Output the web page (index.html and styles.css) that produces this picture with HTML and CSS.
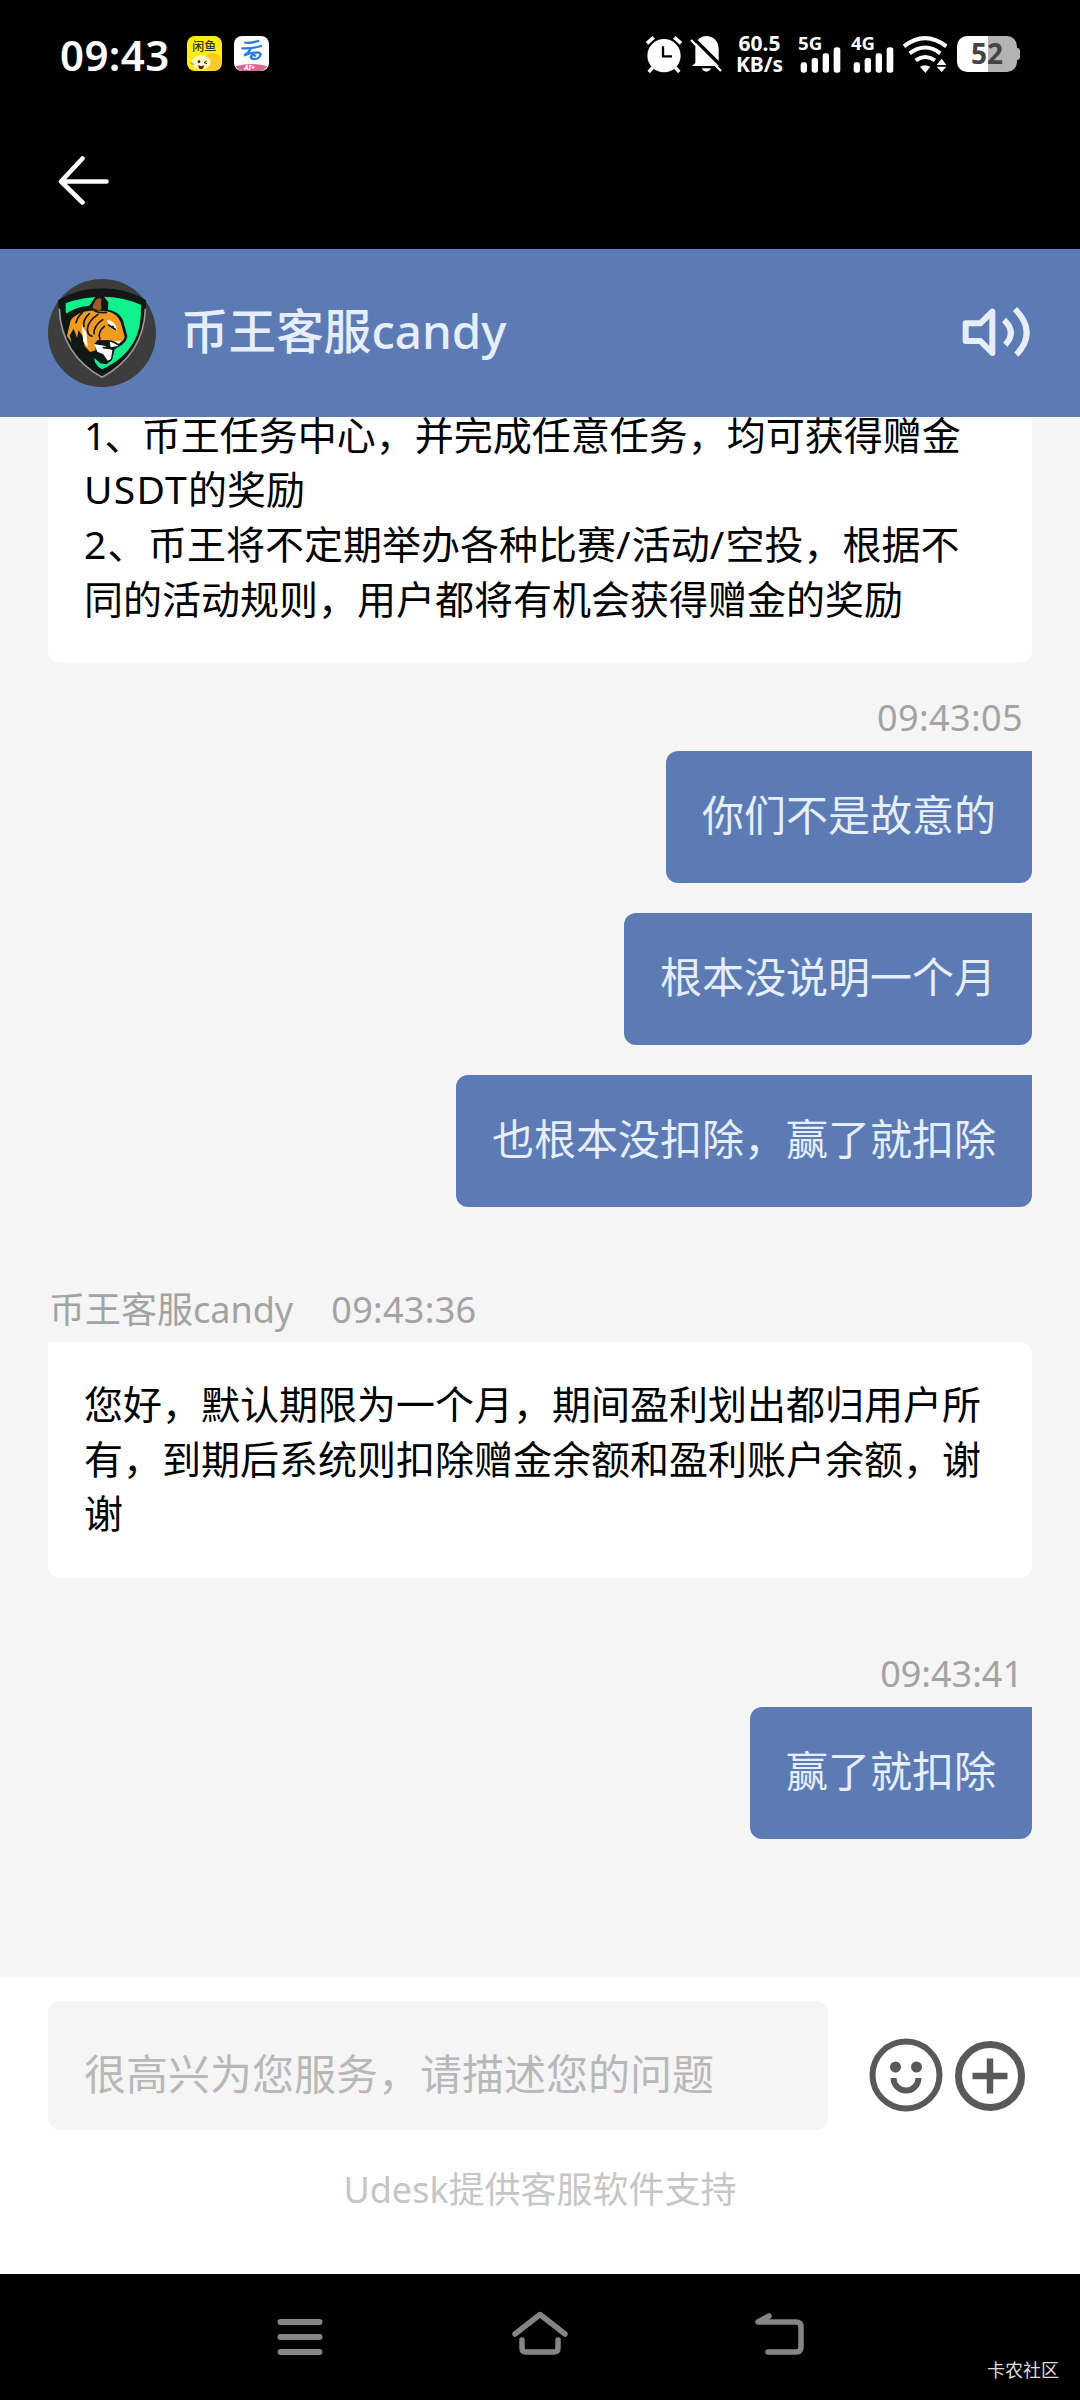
FILE: index.html
```html
<!DOCTYPE html>
<html lang="zh-CN">
<head>
    <meta charset="UTF-8">
    <meta name="viewport" content="width=device-width, initial-scale=1.0">
    <title>币王客服candy</title>
    <link rel="stylesheet" href="styles.css">
</head>
<body>
    <div class="screen">
        <div class="status-bar">
            <span class="clock">09:43</span>
            <svg class="app-icon app-fish" viewBox="0 0 105 105">
                <rect width="105" height="105" rx="24" fill="#ffec14"/>
                <circle cx="76" cy="78" r="27" fill="#ffc928"/>
                <ellipse cx="42" cy="79" rx="29" ry="22" fill="#fff6b8"/>
                <circle cx="36" cy="77" r="4" fill="#222"/>
                <path d="M59 75l-8 5 9 3" fill="none" stroke="#222" stroke-width="3"/>
                <path d="M34 88q9 5 17 0-1 12-9 12t-8-12z" fill="#5b1a10"/>
                <path d="M10 80l10 6" stroke="#f28b30" stroke-width="4"/>
                <text x="16" y="45" font-size="36" font-weight="500" fill="#333" textLength="72">闲鱼</text>
            </svg>
            <svg class="app-icon app-cloud" viewBox="0 0 105 105">
                <rect width="105" height="105" rx="24" fill="#fff"/>
                <path d="M5 91q48-14 95 0-8 14-24 14H28Q12 105 5 91z" fill="#d86a92"/>
                <path d="M34 20q18 2 39-5M25 37q32 1 56-7M50 39q-8 14-20 19 22-9 40-9 12 2 9 8-4 13-20 12-12-2-7-9 6-5 11-1" fill="none" stroke="#2b7fd8" stroke-width="7" stroke-linecap="round"/>
                <text x="31" y="102" font-size="20" font-weight="700" font-style="italic" fill="#fff">AI+</text>
            </svg>
            <div class="status-right">
                <svg width="38" height="38" viewBox="74 44 114 114" fill="#fff">
                    <circle cx="131" cy="106" r="50"/>
                    <path d="M80 69l20-18M162 51l20 18" stroke="#fff" stroke-width="11"/>
                    <path d="M97 142l-12 13M165 142l12 13" stroke="#fff" stroke-width="10"/>
                    <path d="M128 78v30h27" fill="none" stroke="#000" stroke-width="7"/>
                </svg>
                <svg class="bell" width="33" height="38" viewBox="211 44 99 114">
                    <path d="M227 128V85c0-23 13-38 33-38s37 15 37 38v40l6 12H217z" fill="#fff"/>
                    <path d="M246 144h28q-5 10-14 10t-14-10z" fill="#fff"/>
                    <path d="M219 51l92 92" stroke="#000" stroke-width="10"/>
                    <path d="M214 59l90 93" stroke="#fff" stroke-width="7"/>
                </svg>
                <div class="speed"><span>60.5</span><span>KB/s</span></div>
                <svg class="signal" width="43" height="38" viewBox="532 44 129 114" fill="#fff">
                    <text x="532" y="89" font-size="51" font-weight="700" textLength="73" lengthAdjust="spacingAndGlyphs">5G</text>
                    <rect x="540" y="126" width="19" height="31" rx="7"/>
                    <rect x="573" y="113" width="19" height="44" rx="7"/>
                    <rect x="606" y="99" width="19" height="58" rx="7"/>
                    <rect x="639" y="81" width="20" height="76" rx="8"/>
                </svg>
                <svg class="signal signal-2" width="43" height="38" viewBox="532 44 129 114" fill="#fff">
                    <text x="532" y="89" font-size="51" font-weight="700" textLength="72" lengthAdjust="spacingAndGlyphs">4G</text>
                    <rect x="540" y="126" width="19" height="31" rx="7"/>
                    <rect x="573" y="113" width="19" height="44" rx="7"/>
                    <rect x="606" y="99" width="19" height="58" rx="7"/>
                    <rect x="639" y="81" width="20" height="76" rx="8"/>
                </svg>
                <svg class="wifi" width="45" height="38" viewBox="850 44 135 114">
                    <g fill="none" stroke="#fff" stroke-width="12">
                        <path d="M853 78q63-49 127 0"/>
                        <path d="M870 99q47-35 92 0"/>
                        <path d="M888 120q29-20 58 0"/>
                    </g>
                    <path d="M901 139q15-9 31 0l-15 19zM951 134l15-19 14 19zM951 139l15 16 14-16z" fill="#fff"/>
                </svg>
                <div class="battery"><span>52</span></div>
            </div>
        </div>

        <div class="nav-bar">
            <svg width="52" height="50" viewBox="0 0 52 50" fill="none" stroke="#fff" stroke-width="4.6" stroke-linecap="round" stroke-linejoin="round">
                <path d="M25.500 3.500L4 26.500l21.500 21M4.500 26.500h45"/>
            </svg>
        </div>

        <div class="header">
            <svg class="avatar" viewBox="24 26 324 324">
                <circle cx="186" cy="188" r="162" fill="#3d3d3d"/>
                <path d="M54 90Q110 54 186 54t132 36q6 158-132 234Q60 252 54 90z" fill="#101816"/>
                <path d="M58 115q6 138 128 206 126-70 130-206" fill="none" stroke="#9a9a9a" stroke-width="5"/>
                <path d="M77 99q50-20 109-20 64 0 117 24 2 72-22 112-29 52-95 82-27-14-26-50L77 125z" fill="#10f08d"/>
                <!-- tiger silhouette -->
                <path d="M75 134q26-24 73-28l18-27 22-5 17 22-1 22q42 8 48 44l10 36q-4 22-26 31l-12 8-8 32-17 13-18-3-18-16-2 24q-64-40-82-120z" fill="#101816"/>
                <!-- coat -->
                <path d="M92 150q20-26 57-29l48 1q34 5 45 34l12 43-5 14-22 5-18-6-35-4-11 12 4 20-17 5-16-17-6-30-12-18-5 22-10-27-12 20 6 22-14-20z" fill="#f09a22"/>
                <path d="M157 114q5-26 21-31 12 6 14 24l-12 14z" fill="#9c5c26"/>
                <path d="M183 91q11-4 16 6v20l-14 4z" fill="#101816"/>
                <path d="M200 149q16 0 26 15l6 15-10-3-15-12zM125 164l5 50 13 17-4-46-10-12zM162 221l30 5 25 13-4 27-10 5-13-19-18-8zM209 214l36-2-11 15-22 4z" fill="#fff"/>
                <path d="M127 127q-14 12-19 30M148 130q-21 19-16 38M174 132q-27 18-31 39t13 27M188 148q-27 18-26 42M193 168q-21 17-13 38M165 123q16 6 34 3M206 164l20 13M191 213q17-4 31 3l15 8 18-15M190 232l26 3" fill="none" stroke="#101816" stroke-width="5" stroke-linecap="round" stroke-linejoin="round"/>
                <circle cx="218" cy="170" r="4" fill="#101816"/>
            </svg>
            <div class="title">币王客服candy</div>
            <svg class="speaker" width="68" height="54" viewBox="97 80 204 162" fill="none" stroke="#e6eefc" stroke-width="18">
                <path d="M108 132h44l36-35v124l-36-36h-44z" stroke-linejoin="round"/>
                <path d="M223 122q39 36 4 74M256 89q68 70 4 137"/>
            </svg>
        </div>

        <div class="chat">
            <div class="card"><span class="tight">1、</span>币王任务中心，并完成任意任务，均可获得赠金<br><span class="wide">USDT</span>的奖励<br><span class="wide">2、</span>币王将不定期举办各种比赛<span class="wide">/</span>活动<span class="wide">/</span>空投，根据不<br>同的活动规则，用户都将有机会获得赠金的奖励</div>
            <div class="meta meta-right">09:43:05</div>
            <div class="bubble">你们不是故意的</div>
            <div class="bubble">根本没说明一个月</div>
            <div class="bubble">也根本没扣除，赢了就扣除</div>
            <div class="meta meta-left"><span>币王客服candy</span><span class="time">09:43:36</span></div>
            <div class="card card-reply">您好，默认期限为一个月，期间盈利划出都归用户所<br>有，到期后系统则扣除赠金余额和盈利账户余额，谢<br>谢</div>
            <div class="meta meta-right meta-last">09:43:41</div>
            <div class="bubble">赢了就扣除</div>
        </div>

        <div class="footer">
            <div class="input-row">
                <div class="input">很高兴为您服务，请描述您的问题</div>
                <svg class="emoji" width="74" height="74" viewBox="0 0 74 74" fill="none" stroke="#595959">
                    <circle cx="37" cy="37" r="33.500" stroke-width="6"/>
                    <circle cx="26.500" cy="29" r="5.500" fill="#595959" stroke="none"/>
                    <circle cx="47.500" cy="29" r="5.500" fill="#595959" stroke="none"/>
                    <path d="M24.500 40a12.500 12.500 0 0 0 25 0" stroke-width="6"/>
                </svg>
                <svg class="plus" width="70" height="70" viewBox="0 0 70 70" fill="none" stroke="#595959">
                    <circle cx="35" cy="35" r="31.500" stroke-width="7"/>
                    <path d="M35 17.500v35M17.500 35h35" stroke-width="6.500"/>
                </svg>
            </div>
            <div class="support">Udesk提供客服软件支持</div>
        </div>

        <div class="system-nav">
            <svg width="60" height="50" viewBox="0 0 60 50" fill="none" stroke="#858585" stroke-width="6" stroke-linecap="round">
                <path d="M10.500 12h39M10.500 27h39M10.500 42h39"/>
            </svg>
            <svg width="60" height="50" viewBox="0 0 60 50" fill="none" stroke="#858585" stroke-width="5.500" stroke-linecap="round" stroke-linejoin="round">
                <path d="M5 24L30 4.500 55 24M12 30v8q0 4 4 4h28q4 0 4-4v-8"/>
            </svg>
            <svg width="60" height="50" viewBox="0 0 60 50" fill="none" stroke="#858585" stroke-width="5.500" stroke-linecap="round" stroke-linejoin="round">
                <path d="M19 6l-11 6h38q5 0 5 5v20q0 5-5 5H18"/>
            </svg>
            <span class="watermark">卡农社区</span>
        </div>
    </div>
</body>
</html>
```

FILE: styles.css
```css
body {
    margin: 0;
    background-color: #000;
    font-family: "Noto Sans", "Noto Sans CJK SC", sans-serif;
}
svg {
    display: block;
    flex-shrink: 0;
}
.screen {
    width: 1080px;
    height: 2400px;
    display: flex;
    flex-direction: column;
    overflow: hidden;
}
.status-bar {
    height: 71px;
    padding: 36px 60px 0 60px;
    box-sizing: border-box;
    display: flex;
    color: #fff;
}
.clock {
    width: 127px;
    line-height: 37px;
    font-size: 42px;
    font-weight: 600;
    letter-spacing: 0.4px;
}
.app-icon {
    width: 35px;
    height: 35px;
}
.app-cloud {
    margin-left: 12px;
}
.status-right {
    display: flex;
    height: 38px;
    margin-left: auto;
    margin-top: -1px;
}
.bell {
    margin-left: 7px;
}
.speed {
    width: 47px;
    margin-left: 13px;
    margin-top: -2px;
    display: flex;
    flex-direction: column;
    align-items: center;
    font-size: 21px;
    font-weight: 700;
    line-height: 21px;
    white-space: nowrap;
}
.signal {
    margin-left: 15px;
    overflow: visible;
}
.signal-2 {
    margin-left: 10px;
}
.wifi {
    margin-left: 9px;
}
.battery {
    width: 60px;
    height: 36px;
    margin: 1px 3px 0 9px;
    border-radius: 10px;
    background: linear-gradient(to right, #fff 51%, #b3b3b3 51%);
    color: #444;
    font-size: 28px;
    font-weight: 700;
    line-height: 35px;
    text-align: center;
    position: relative;
}
.battery::after {
    content: "";
    position: absolute;
    right: -3px;
    top: 12px;
    width: 3px;
    height: 12px;
    border-radius: 0 3px 3px 0;
    background-color: #b3b3b3;
}
.nav-bar {
    height: 178px;
    padding: 84px 57px 0;
    box-sizing: border-box;
}
.header {
    height: 168px;
    padding: 0 50px 0 48px;
    box-sizing: border-box;
    display: flex;
    align-items: center;
    background-color: #5c7bb5;
    flex-shrink: 0;
}
.avatar {
    width: 108px;
    height: 108px;
}
.title {
    flex: 1;
    margin-left: 25px;
    padding-bottom: 5px;
    color: #e6eefc;
    font-size: 47.6px;
    font-weight: 500;
    line-height: 66px;
}
.chat {
    height: 1560px;
    padding: 0 48px 138px;
    box-sizing: border-box;
    display: flex;
    flex-direction: column;
    justify-content: flex-end;
    background-color: #f5f5f5;
    overflow: hidden;
}
.card {
    flex-shrink: 0;
    padding: 35px 36px 37px;
    border-radius: 12px;
    background-color: #fff;
    color: #000;
    font-size: 39px;
    line-height: 54.6px;
    white-space: nowrap;
}
.card-reply {
    border-top-left-radius: 0;
}
.tight {
    letter-spacing: -1.8px;
}
.wide {
    letter-spacing: 1.3px;
}
.meta {
    color: #a3a3a3;
    font-size: 36px;
    line-height: 50px;
    margin-bottom: 8px;
}
.meta-right {
    margin-top: 30px;
    padding-right: 9px;
    text-align: right;
    letter-spacing: 0.4px;
}
.meta-left {
    margin-top: 78px;
    margin-bottom: 7px;
    padding-left: 1px;
}
.meta-last {
    margin-top: 71px;
    letter-spacing: 0;
}
.time {
    margin-left: 38px;
    letter-spacing: 0.3px;
}
.bubble {
    align-self: flex-end;
    padding: 34px 36px 38px;
    border-radius: 12px 0 12px 12px;
    background-color: #5c7bb5;
    color: #e6eefc;
    font-size: 42px;
    line-height: 60px;
    white-space: nowrap;
}
.bubble + .bubble {
    margin-top: 30px;
}
.footer {
    height: 297px;
    padding: 24px 48px 0;
    box-sizing: border-box;
    background-color: #fff;
}
.input-row {
    display: flex;
    align-items: center;
}
.input {
    width: 780px;
    height: 129px;
    padding: 43px 36px 0;
    box-sizing: border-box;
    border-radius: 12px;
    background-color: #f5f5f5;
    color: #b8b8b8;
    font-size: 42px;
    line-height: 60px;
    white-space: nowrap;
}
.emoji {
    margin-left: 41px;
    margin-top: 19px;
}
.plus {
    margin-left: 12px;
    margin-top: 20px;
}
.support {
    margin-top: 35px;
    color: #c6c6c6;
    font-size: 36px;
    line-height: 50px;
    text-align: center;
}
.system-nav {
    height: 126px;
    padding: 36px 270px 0;
    box-sizing: border-box;
    display: flex;
    justify-content: space-between;
    position: relative;
}
.watermark {
    position: absolute;
    right: 21px;
    bottom: 17px;
    color: #ddd;
    font-size: 18px;
    line-height: 26px;
}
```
